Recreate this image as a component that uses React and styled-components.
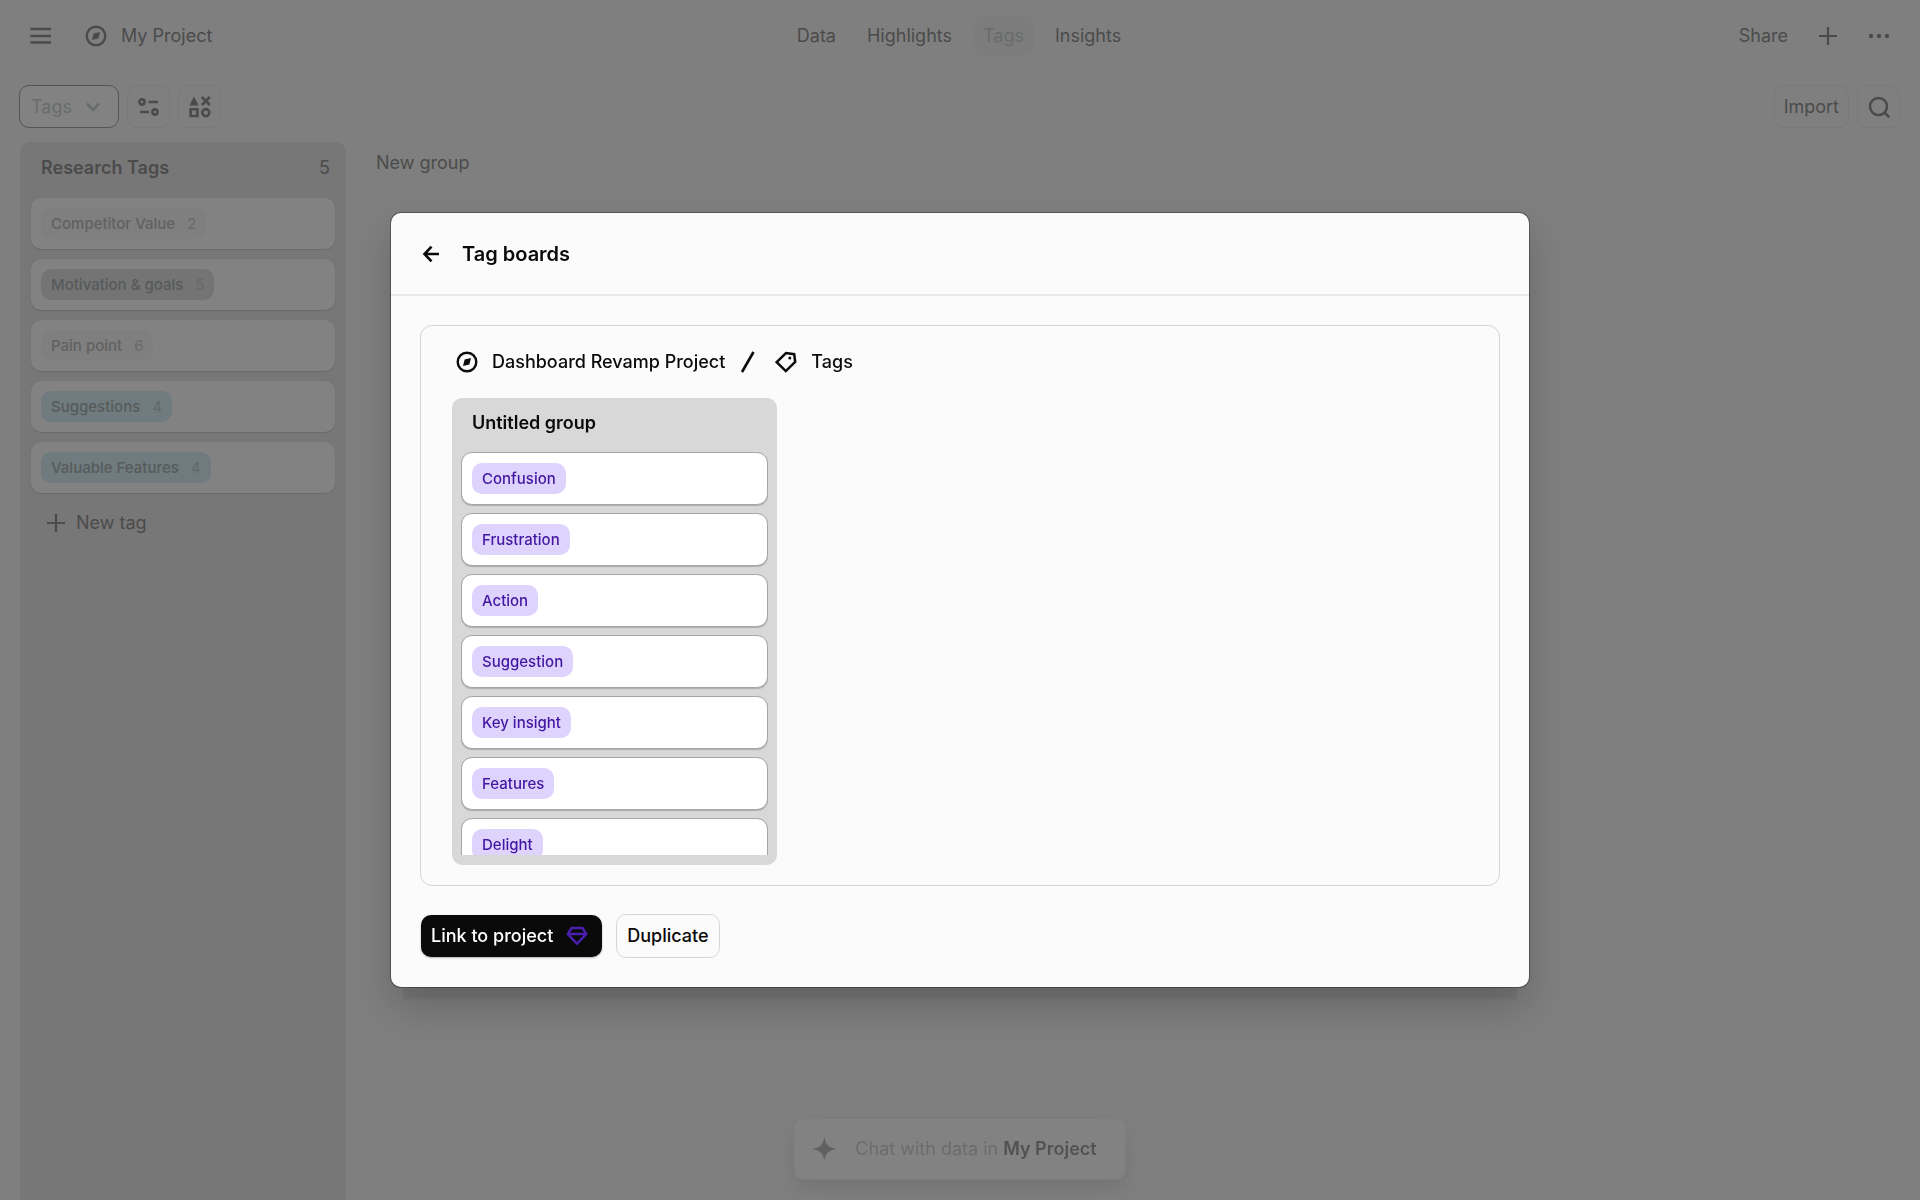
import React from "react";
import styled, { createGlobalStyle, css } from "styled-components";

const color = {
  page: "#7f7f7f",
  ink: "#4b4b4b",
  faint: "#686c6c",
  line: "#797979",
  column: "#777777",
  card: "#828282",
  surface: "#fbfbfb",
  black: "#0a0a0a",
};

const GlobalStyle = createGlobalStyle`
  *, *::before, *::after { box-sizing: border-box; }
  body {
    margin: 0;
    background: ${color.page};
    color: ${color.ink};
    font-family: Inter, "Liberation Sans", sans-serif;
    font-size: 18px;
    line-height: 24px;
  }
  button, select { font: inherit; color: inherit; margin: 0; }
  h1, h2, h3, p, ul { margin: 0; padding: 0; font-size: inherit; font-weight: inherit; }
  ul { list-style: none; }
  svg { display: block; flex: none; }
`;

const Screen = styled.div`
  display: flex;
  flex-direction: column;
  height: 100vh;
  overflow: hidden;
`;

const TopBar = styled.header`
  display: grid;
  grid-template-columns: 1fr auto 1fr;
  align-items: center;
  height: 72px;
  padding: 0 30px 0 28px;
`;

const Cluster = styled.div`
  display: flex;
  align-items: center;
  justify-content: ${(p) => (p.$end ? "flex-end" : "flex-start")};
  gap: ${(p) => p.$gap}px;
`;

const PlainButton = styled.button`
  display: inline-flex;
  align-items: center;
  gap: 14px;
  padding: 0;
  border: 0;
  background: none;
  cursor: pointer;
`;

const Nav = styled.nav`
  display: flex;
  gap: 11px;
`;

const NavLink = styled.a`
  padding: 8px 10px;
  border-radius: 10px;
  color: ${(p) => (p.$active ? color.faint : color.ink)};
  background: ${(p) => (p.$active ? "#7c7c7c" : "transparent")};
  text-decoration: none;
`;

const Toolbar = styled.div`
  display: flex;
  justify-content: space-between;
  padding: 13px 20px 0 19px;
`;

const control = css`
  display: inline-flex;
  align-items: center;
  justify-content: center;
  height: 43px;
  border: 1px solid ${color.line};
  border-radius: 10px;
  background: transparent;
  cursor: pointer;
`;

const SelectBox = styled.label`
  ${control}
  gap: 11px;
  padding: 0 15px 0 11px;
  border-color: #555555;
  background: ${color.card};
  color: ${color.faint};
`;

const Select = styled.select`
  appearance: none;
  padding: 0;
  border: 0;
  outline: 0;
  background: transparent;
`;

const ToolButton = styled.button`
  ${control}
  min-width: 43px;
  padding: 0 ${(p) => (p.$text ? 9 : 0)}px;
`;

const Board = styled.main`
  display: flex;
  flex: 1;
  align-items: stretch;
  gap: 30px;
  padding: 14px 20px 0;
`;

const Column = styled.section`
  width: 326px;
  padding: 13px 11px;
  border-radius: 10px 10px 0 0;
  background: ${color.column};
`;

const ColumnHeader = styled.header`
  display: flex;
  justify-content: space-between;
  padding: 0 5px 0 10px;
  margin-bottom: 17px;
  line-height: 26px;
`;

const ColumnTitle = styled.h2`
  font-weight: 600;
`;

const TagList = styled.ul`
  display: flex;
  flex-direction: column;
  gap: 10px;
`;

const TagCard = styled.li`
  padding: 10px;
  border-radius: 10px;
  background: ${color.card};
  box-shadow: 0 1px 1px #6a6a6a, 0 0 1px #707070;
`;

const tones = {
  plain: "#7f7f7f",
  dark: "#747474",
  blue: "#6f7b7e",
};

const Chip = styled.span`
  display: flex;
  gap: 12px;
  width: fit-content;
  padding: 0 10px;
  border-radius: 10px;
  background: ${(p) => tones[p.$tone]};
  color: ${(p) => (p.$tone === "plain" ? "#616161" : "#575a5b")};
  font-size: 15px;
  font-weight: 500;
  line-height: 31px;
`;

const Count = styled.span`
  color: ${(p) => (p.$tone === "blue" ? "#62686a" : "#696969")};
  font-weight: 400;
`;

const NewTag = styled(PlainButton)`
  gap: 11px;
  margin: 18px 16px;
`;

const NewGroup = styled(PlainButton)`
  align-self: flex-start;
  padding: 9px 0;
`;

const ChatBar = styled.button`
  position: fixed;
  bottom: 20px;
  left: 50%;
  transform: translateX(-50%);
  display: flex;
  align-items: center;
  gap: 19px;
  height: 62px;
  padding: 0 29px 0 18px;
  border: 1px solid #7c7c7c;
  border-radius: 10px;
  background: ${color.card};
  box-shadow: 0 10px 20px -4px #717171;
  color: #6c6c6c;
  white-space: nowrap;
`;

const ChatTarget = styled.strong`
  color: #525252;
  font-weight: 600;
`;

const Overlay = styled.div`
  position: fixed;
  inset: 0;
  display: flex;
  align-items: center;
  justify-content: center;
  padding: 24px;
`;

const Modal = styled.div`
  width: 100%;
  max-width: 1138px;
  border-radius: 10px;
  background: ${color.surface};
  color: ${color.black};
  box-shadow:
    0 0 0 1px rgba(0, 0, 0, 0.3),
    0 24px 2px -12px rgba(20, 20, 25, 0.08),
    0 20px 40px rgba(0, 0, 0, 0.19);
`;

const ModalHeader = styled.header`
  display: flex;
  align-items: center;
  gap: 20px;
  height: 83px;
  padding: 0 29px;
  border-bottom: 2px solid #e8e8e8;
`;

const ModalTitle = styled.h1`
  font-size: 20px;
  font-weight: 600;
`;

const ModalBody = styled.div`
  padding: 29px;
`;

const Preview = styled.section`
  padding: 24px 31px 20px;
  border: 1px solid #d4d4d4;
  border-radius: 12px;
`;

const Breadcrumb = styled.div`
  display: flex;
  align-items: center;
  gap: 14px;
  padding-left: 4px;
  margin-bottom: 24px;
  font-weight: 500;
`;

const Group = styled.section`
  width: 100%;
  max-width: 325px;
  padding: 12px 9px 10px;
  border-radius: 10px;
  background: #d8d8d8;
`;

const GroupTitle = styled.h2`
  padding: 0 11px;
  margin-bottom: 16px;
  font-weight: 600;
  line-height: 26px;
`;

const GroupList = styled.ul`
  display: flex;
  flex-direction: column;
  gap: 8px;
  height: 403px;
  overflow: hidden;
`;

const GroupCard = styled.li`
  flex: none;
  padding: 10px;
  border: 1px solid #a6a6a6;
  border-radius: 11px;
  background: #ffffff;
  box-shadow: 0 1px 1px rgba(0, 0, 0, 0.2);
`;

const GroupChip = styled(Chip)`
  background: #ddd3fd;
  color: #4316a0;
`;

const Actions = styled.footer`
  display: flex;
  align-items: center;
  gap: 14px;
  padding-top: 28px;
`;

const ActionButton = styled.button`
  display: inline-flex;
  align-items: center;
  gap: ${(p) => (p.$primary ? 13 : 0)}px;
  height: ${(p) => (p.$primary ? 42 : 44)}px;
  margin-left: ${(p) => (p.$primary ? 1 : 0)}px;
  padding: ${(p) => (p.$primary ? "0 14px 0 10px" : "0 10px")};
  border: ${(p) => (p.$primary ? "0" : "1px solid #d6d6d6")};
  border-radius: 10px;
  background: ${(p) => (p.$primary ? color.black : color.surface)};
  color: ${(p) => (p.$primary ? "#ffffff" : color.black)};
  box-shadow: ${(p) => (p.$primary ? "0 1px 2px rgba(0, 0, 0, 0.3)" : "none")};
  font-weight: 500;
  cursor: pointer;
`;

const Icon = ({ size = 22, box = 22, width = 2, children }) => (
  <svg width={size} height={size} viewBox={`0 0 ${box} ${box}`} fill="none" stroke="currentColor" strokeWidth={width} aria-hidden="true">
    {children}
  </svg>
);

const MenuIcon = () => (
  <Icon size={24} box={24} width={2.3}><path d="M2.500 5h20.500M2.500 12h20.500M2.500 18.500h20.500" /></Icon>
);
const CompassIcon = () => (
  <Icon>
    <circle cx="11" cy="11" r="9.300" strokeWidth="2.400" />
    <path d="M15 7 13.400 13.400 7 15l1.600-6.400z" fill="currentColor" stroke="none" />
  </Icon>
);
const PlusIcon = () => (
  <Icon size={18} box={18} width={2.2}><path d="M9 0v18M0 9h18" /></Icon>
);
const DotsIcon = () => (
  <Icon>
    <g fill="currentColor" stroke="none">
      <circle cx="3" cy="11" r="2.200" /><circle cx="11" cy="11" r="2.200" /><circle cx="19" cy="11" r="2.200" />
    </g>
  </Icon>
);
const ChevronIcon = () => (
  <Icon size={20} box={20} width={2.6}><path d="m4 6.500 6 6.500 6-6.500" /></Icon>
);
const SlidersIcon = () => (
  <Icon width={2.6}>
    <circle cx="4" cy="6" r="2.600" /><path d="M10.500 6H20M2 16h9" /><circle cx="17" cy="16" r="2.600" />
  </Icon>
);
const ShapesIcon = () => (
  <Icon width={2.6}>
    <path d="M5 0.500 9.700 9.500H0.300z" fill="currentColor" stroke="none" />
    <path d="m12.800 1 8 8M20.800 1l-8 8M1.600 13.200h6.800v6.800H1.600z" />
    <circle cx="16.800" cy="16.600" r="3.500" />
  </Icon>
);
const SearchIcon = () => (
  <Icon width={2.5}><circle cx="10.500" cy="10.500" r="8.500" /><path d="m16.500 16.500 4.800 4.800" /></Icon>
);
const ArrowLeftIcon = () => (
  <Icon width={2.6}><path d="M19 11H5M11.500 3.700 4.500 11l7 7.300" /></Icon>
);
const SlashIcon = () => (
  <Icon width={2.6}><path d="M3 21 14.500 1" /></Icon>
);
const TagIcon = () => (
  <Icon width={2.5}>
    <path d="M1.700 11.200 11 2l8.200 1.200 1 7.600-9.400 9.300z" />
    <circle cx="14.800" cy="7" r="1.500" fill="currentColor" stroke="none" />
  </Icon>
);
const GemIcon = () => (
  <svg width="22" height="22" viewBox="0 0 22 22" fill="none" stroke="#4a1fb0" strokeWidth="2.4" aria-hidden="true">
    <path d="M5.500 3h11l3.700 6L11 18.800 1.800 9zM3 9h16" />
  </svg>
);
const SparkIcon = () => (
  <svg width="24" height="24" viewBox="0 0 24 24" fill="#606060" aria-hidden="true">
    <path d="M12 0c1.200 7.500 3.500 10.500 12 12-8.500 1.500-10.800 4.500-12 12-1.200-7.500-3.500-10.500-12-12C8.500 10.500 10.800 7.500 12 0z" />
  </svg>
);

const researchTags = [
  { name: "Competitor Value", count: 2, tone: "plain" },
  { name: "Motivation & goals", count: 5, tone: "dark" },
  { name: "Pain point", count: 6, tone: "plain" },
  { name: "Suggestions", count: 4, tone: "blue" },
  { name: "Valuable Features", count: 4, tone: "blue" },
];

const groupTags = ["Confusion", "Frustration", "Action", "Suggestion", "Key insight", "Features", "Delight"];

export default function App() {
  return (
    <>
      <GlobalStyle />
      <Screen>
        <TopBar>
          <Cluster $gap={33}>
            <PlainButton aria-label="Menu"><MenuIcon /></PlainButton>
            <PlainButton><CompassIcon />My Project</PlainButton>
          </Cluster>
          <Nav>
            {["Data", "Highlights", "Tags", "Insights"].map((item) => (
              <NavLink key={item} href="#" $active={item === "Tags"}>{item}</NavLink>
            ))}
          </Nav>
          <Cluster $gap={31} $end>
            <PlainButton>Share</PlainButton>
            <PlainButton aria-label="Add"><PlusIcon /></PlainButton>
            <PlainButton aria-label="More"><DotsIcon /></PlainButton>
          </Cluster>
        </TopBar>

        <Toolbar>
          <Cluster $gap={8}>
            <SelectBox>
              <Select aria-label="View"><option>Tags</option></Select>
              <ChevronIcon />
            </SelectBox>
            <ToolButton aria-label="Fields"><SlidersIcon /></ToolButton>
            <ToolButton aria-label="Group by type"><ShapesIcon /></ToolButton>
          </Cluster>
          <Cluster $gap={8}>
            <ToolButton $text>Import</ToolButton>
            <ToolButton aria-label="Search"><SearchIcon /></ToolButton>
          </Cluster>
        </Toolbar>

        <Board>
          <Column>
            <ColumnHeader>
              <ColumnTitle>Research Tags</ColumnTitle>
              <span>5</span>
            </ColumnHeader>
            <TagList>
              {researchTags.map((tag) => (
                <TagCard key={tag.name}>
                  <Chip $tone={tag.tone}>
                    {tag.name}
                    <Count $tone={tag.tone}>{tag.count}</Count>
                  </Chip>
                </TagCard>
              ))}
            </TagList>
            <NewTag><PlusIcon />New tag</NewTag>
          </Column>
          <NewGroup>New group</NewGroup>
        </Board>
      </Screen>

      <ChatBar>
        <SparkIcon />
        <span>Chat with data in <ChatTarget>My Project</ChatTarget></span>
      </ChatBar>

      <Overlay>
        <Modal role="dialog" aria-modal="true" aria-labelledby="dialog-title">
          <ModalHeader>
            <PlainButton aria-label="Back"><ArrowLeftIcon /></PlainButton>
            <ModalTitle id="dialog-title">Tag boards</ModalTitle>
          </ModalHeader>
          <ModalBody>
            <Preview>
              <Breadcrumb>
                <CompassIcon />
                <span>Dashboard Revamp Project</span>
                <SlashIcon />
                <TagIcon />
                <span>Tags</span>
              </Breadcrumb>
              <Group>
                <GroupTitle>Untitled group</GroupTitle>
                <GroupList>
                  {groupTags.map((name) => (
                    <GroupCard key={name}><GroupChip $tone="plain">{name}</GroupChip></GroupCard>
                  ))}
                </GroupList>
              </Group>
            </Preview>
            <Actions>
              <ActionButton $primary>Link to project<GemIcon /></ActionButton>
              <ActionButton>Duplicate</ActionButton>
            </Actions>
          </ModalBody>
        </Modal>
      </Overlay>
    </>
  );
}
